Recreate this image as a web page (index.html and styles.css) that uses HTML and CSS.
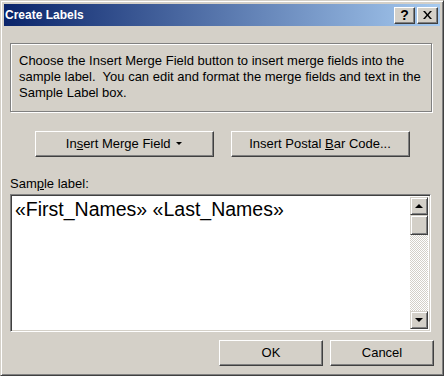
FILE: index.html
```html
<!DOCTYPE html>
<html>
<head>
<meta charset="utf-8">
<link rel="stylesheet" href="styles.css">
</head>
<body>
<div class="window">
  <div class="titlebar">
    <span class="title">Create Labels</span>
    <div class="caps">
      <div class="capbtn help">?</div>
      <div class="capbtn close">
        <svg width="9" height="8" viewBox="0 0 9 8"><path d="M0 0h2l2.5 3 2.5-3h2l-3.5 4 3.5 4h-2l-2.5-3-2.5 3h-2l3.5-4z" fill="#000"/></svg>
      </div>
    </div>
  </div>
  <div class="content">
    <div class="info">Choose the Insert Merge Field button to insert merge fields into the sample label.&nbsp; You can edit and format the merge fields and text in the Sample Label box.</div>
    <div class="actions">
      <div class="btn wide"><span>In<u>s</u>ert Merge Field <span class="caret"></span></span></div>
      <div class="btn wide"><span>Insert Postal <u>B</u>ar Code...</span></div>
    </div>
    <div class="label">Sam<u>p</u>le label:</div>
    <div class="sample">
      <div class="sample-text">«First_Names» «Last_Names»</div>
      <div class="scrollbar">
        <div class="sbtn"><span class="tri up"></span></div>
        <div class="thumb"></div>
        <div class="track"></div>
        <div class="sbtn"><span class="tri down"></span></div>
      </div>
    </div>
    <div class="footer">
      <div class="btn std"><span>OK</span></div>
      <div class="btn std"><span>Cancel</span></div>
    </div>
  </div>
</div>
</body>
</html>
```
FILE: styles.css
```css
html, body {
  margin: 0;
  padding: 0;
  background: #d4d0c8;
}
body {
  font-family: "Liberation Sans", Arial, sans-serif;
  font-size: 13px;
  color: #000;
}
.window {
  width: 444px;
  height: 376px;
  box-sizing: border-box;
  background: #d4d0c8;
  border-top: 1px solid #d4d0c8;
  border-left: 1px solid #d4d0c8;
  border-right: 1px solid #404040;
  border-bottom: 1px solid #404040;
  box-shadow: inset 1px 1px 0 #fff, inset -1px -1px 0 #808080;
  padding: 3px;
  display: flex;
  flex-direction: column;
}
.titlebar {
  height: 22px;
  background: linear-gradient(to right, #0a246a, #a6caf0);
  display: flex;
  align-items: center;
  justify-content: space-between;
  padding: 0 2px 0 1px;
}
.title {
  color: #fff;
  font-weight: bold;
  font-size: 12px;
}
.caps {
  display: flex;
  gap: 2px;
}
.capbtn {
  width: 21px;
  height: 17px;
  box-sizing: border-box;
  background: #d4d0c8;
  border-top: 1px solid #fff;
  border-left: 1px solid #fff;
  border-right: 1px solid #404040;
  border-bottom: 1px solid #404040;
  box-shadow: inset -1px -1px 0 #808080;
  display: flex;
  align-items: center;
  justify-content: center;
  font-weight: bold;
  font-size: 14px;
  line-height: 1;
}
.help { padding-bottom: 1px; }
.content {
  flex: 1;
  display: flex;
  flex-direction: column;
  padding: 17px 6px 0 6px;
}
.info {
  border: 1px solid #808080;
  box-shadow: inset 1px 1px 0 #fff, 1px 1px 0 #fff;
  height: 69px;
  box-sizing: border-box;
  padding: 9px 8px 0 8px;
  line-height: 16px;
  margin-right: 2px;
}
.actions {
  display: flex;
  justify-content: center;
  gap: 17px;
  margin-top: 19px;
}
.btn {
  height: 26px;
  box-sizing: border-box;
  background: #d4d0c8;
  border-top: 1px solid #fff;
  border-left: 1px solid #fff;
  border-right: 1px solid #404040;
  border-bottom: 1px solid #404040;
  box-shadow: inset -1px -1px 0 #808080;
  display: flex;
  align-items: center;
  justify-content: center;
  padding-bottom: 1px;
}
.wide { width: 179px; }
.std { width: 104px; }
.caret {
  display: inline-block;
  width: 0;
  height: 0;
  border-left: 3px solid transparent;
  border-right: 3px solid transparent;
  border-top: 3px solid #000;
  margin-left: 2px;
  position: relative;
  top: -3px;
}
.label {
  margin-top: 19px;
  line-height: 16px;
  height: 18px;
}
.sample {
  width: 421px;
  height: 138px;
  box-sizing: border-box;
  background: #fff;
  border-top: 1px solid #808080;
  border-left: 1px solid #808080;
  border-right: 1px solid #fff;
  border-bottom: 1px solid #fff;
  box-shadow: inset 1px 1px 0 #404040, inset -1px -1px 0 #d4d0c8;
  display: flex;
  padding: 2px;
}
.sample-text {
  flex: 1;
  font-size: 19.5px;
  line-height: 22px;
  padding: 1px 0 0 2px;
}
.scrollbar {
  width: 18px;
  display: flex;
  flex-direction: column;
}
.sbtn, .thumb {
  height: 18px;
  box-sizing: border-box;
  background: #d4d0c8;
  border-top: 1px solid #d4d0c8;
  border-left: 1px solid #d4d0c8;
  border-right: 1px solid #404040;
  border-bottom: 1px solid #404040;
  box-shadow: inset 1px 1px 0 #fff, inset -1px -1px 0 #808080;
  display: flex;
  align-items: center;
  justify-content: center;
}
.thumb { height: 20px; }
.track {
  flex: 1;
  background-color: #fff;
  background-image: repeating-conic-gradient(#d4d0c8 0 25%, #fff 0 50%);
  background-size: 2px 2px;
}
.tri {
  width: 0;
  height: 0;
  border-left: 4px solid transparent;
  border-right: 4px solid transparent;
}
.tri.up { border-bottom: 4px solid #000; margin-top: -1px; }
.tri.down { border-top: 4px solid #000; }
.footer {
  display: flex;
  justify-content: flex-end;
  gap: 7px;
  margin-top: 8px;
}
```
